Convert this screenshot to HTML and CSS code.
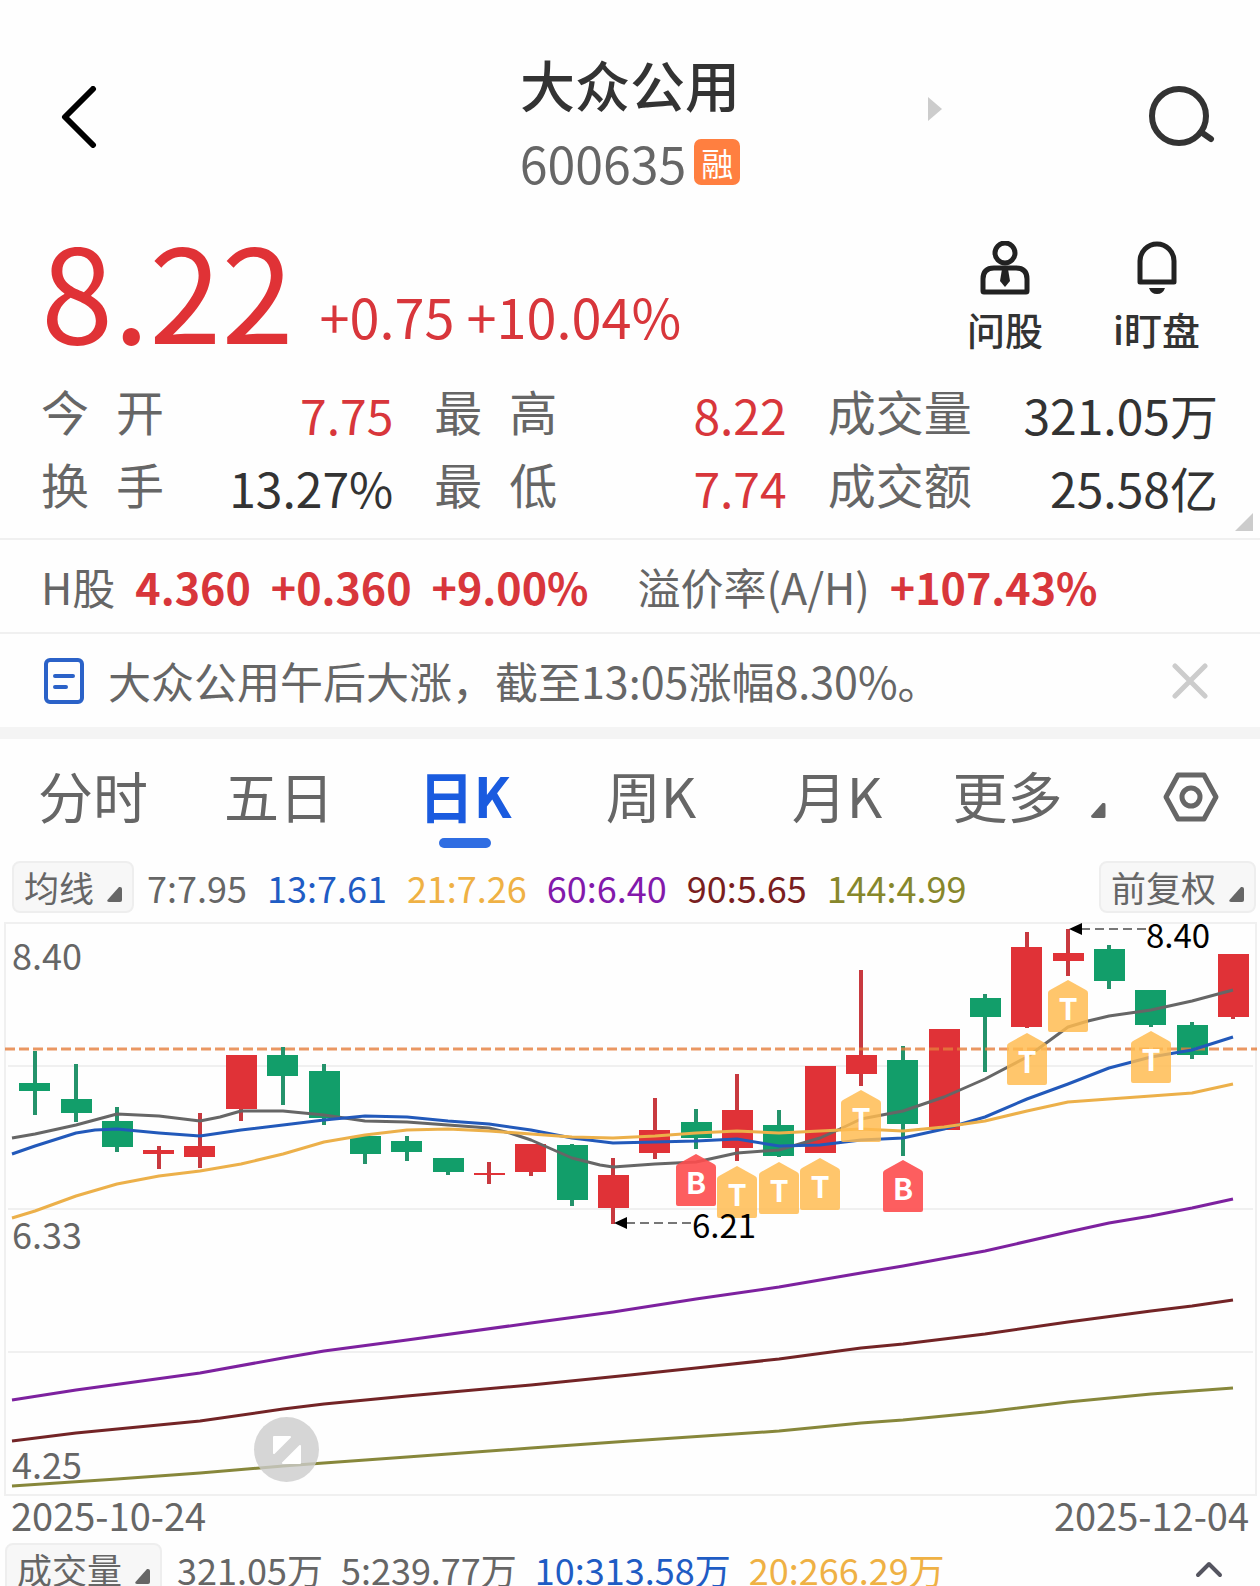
FILE: index.html
```
<!DOCTYPE html>
<html lang="zh-CN">
<head>
    <meta charset="UTF-8">
    <meta name="viewport" content="width=device-width, initial-scale=1.0">
    <title>大众公用 600635</title>
    <link rel="stylesheet" href="styles.css">
</head>
<body>

    <header class="header">
        <button class="iconButton back" aria-label="返回">
            <svg width="36" height="62" viewBox="0 0 36 62"><path d="M32 3L4 31L32 59"/></svg>
        </button>
        <div class="stock">
            <h1>大众公用</h1>
            <p class="code">600635<span class="badge">融</span></p>
        </div>
        <div class="headerRight">
            <button class="iconButton next" aria-label="下一只">
                <svg width="16" height="26" viewBox="0 0 16 26"><path d="M1 1L15 13L1 25z"/></svg>
            </button>
            <button class="iconButton search" aria-label="搜索">
                <svg width="68" height="60" viewBox="0 0 68 60"><circle cx="31" cy="30" r="27"/><path d="M53 46L63 53"/></svg>
            </button>
        </div>
    </header>

    <section class="quote">
        <div class="price">
            <strong>8.22</strong>
            <span>+0.75 +10.04%</span>
        </div>
        <div class="actions">
            <button class="action">
                <svg width="54" height="54" viewBox="0 0 54 54">
                    <circle cx="27" cy="12" r="10"/>
                    <path d="M5 50V38Q5 27 16 27H38Q49 27 49 38V50Q49 51 48 51H6Q5 51 5 50z"/>
                    <path class="solid" d="M24 28H30L32 40L27 46L22 40z"/>
                </svg>
                问股
            </button>
            <button class="action">
                <svg width="54" height="54" viewBox="0 0 54 54">
                    <path d="M10 41V20A17 17 0 0 1 44 20V41z"/>
                    <path class="solid" d="M19 47H35Q33 53 27 53Q21 53 19 47z"/>
                </svg>
                i盯盘
            </button>
        </div>
    </section>

    <dl class="stats">
        <div><dt>今 开</dt><dd class="up">7.75</dd></div>
        <div><dt>最 高</dt><dd class="up">8.22</dd></div>
        <div><dt>成交量</dt><dd>321.05万</dd></div>
        <div><dt>换 手</dt><dd>13.27%</dd></div>
        <div><dt>最 低</dt><dd class="up">7.74</dd></div>
        <div><dt>成交额</dt><dd>25.58亿</dd></div>
    </dl>

    <section class="hshare">
        <span>H股</span>
        <b>4.360</b>
        <b>+0.360</b>
        <b>+9.00%</b>
        <span class="premium">溢价率(A/H)</span>
        <b>+107.43%</b>
    </section>

    <section class="notice">
        <svg width="42" height="48" viewBox="0 0 42 48"><rect x="3" y="3" width="36" height="42" rx="4"/><path d="M12 19H30M12 30H23"/></svg>
        <a href="#">大众公用午后大涨，截至13:05涨幅8.30%。</a>
        <button class="iconButton close" aria-label="关闭">
            <svg width="36" height="36" viewBox="0 0 36 36"><path d="M3 3L33 33M33 3L3 33"/></svg>
        </button>
    </section>

    <nav class="tabs">
        <button>分时</button>
        <button>五日</button>
        <button class="active">日K</button>
        <button>周K</button>
        <button>月K</button>
        <button class="more">更多<i class="corner"></i></button>
        <button aria-label="设置">
            <svg width="56" height="50" viewBox="0 0 56 50"><path d="M15 3H41L53 25L41 47H15L3 25z"/><circle cx="28" cy="25" r="9"/></svg>
        </button>
    </nav>

    <div class="averages">
        <button class="chip">均线<i class="corner"></i></button>
        <span>7:7.95</span>
        <span class="blue">13:7.61</span>
        <span class="yellow">21:7.26</span>
        <span class="purple">60:6.40</span>
        <span class="maroon">90:5.65</span>
        <span class="olive">144:4.99</span>
        <button class="chip last">前复权<i class="corner"></i></button>
    </div>

    <div class="chart">
        <svg viewBox="0 0 1260 574" role="img" aria-label="日K线">
            <defs>
                <path id="pin" d="M0 0L18 10Q20 11 20 13V50Q20 52 18 52H-18Q-20 52 -20 50V13Q-20 11 -18 10z"/>
            </defs>
            <path class="grid" d="M5 1H1256V573H5zM8 144H1253M8 287H1253M8 430H1253"/>

            <g class="axis">
                <text x="12" y="48">8.40</text>
                <text x="12" y="327">6.33</text>
                <text x="12" y="557">4.25</text>
            </g>

            <!-- falling days -->
            <path class="wick down" d="M35 129V193M76 142V200M117 185V230M283 125V183M324 142V203M365 214V242M407 214V239M448 236V253M572 222V284M696 187V227M779 188V235M903 124V234M985 72V150M1109 23V67M1151 68V105M1192 100V137"/>
            <path class="body down" d="M19 161h31v8h-31zM61 177h31v14h-31zM102 199h31v26h-31zM267 133h31v21h-31zM309 149h31v47h-31zM350 214h31v18h-31zM391 219h31v11h-31zM433 236h31v14h-31zM557 223h31v55h-31zM681 200h31v16h-31zM763 203h31v31h-31zM887 138h31v64h-31zM970 76h31v19h-31zM1094 27h31v32h-31zM1135 68h31v35h-31zM1177 103h31v30h-31z"/>
            <!-- rising days -->
            <path class="wick rise" d="M159 224V247M200 191V246M241 133V199M489 240V262M531 222V254M613 236V302M655 176V237M737 152V239M861 48V164M1027 10V106M1068 7V54M1233 32V97"/>
            <path class="body rise" d="M143 228h31v4h-31zM184 224h31v11h-31zM226 133h31v54h-31zM474 251h31v2h-31zM515 222h31v28h-31zM598 253h31v33h-31zM639 208h31v23h-31zM722 188h31v38h-31zM805 144h31v87h-31zM846 133h31v19h-31zM929 107h31v101h-31zM1011 25h31v80h-31zM1053 31h31v8h-31zM1218 32h31v63h-31z"/>

            <path class="cost" d="M5 127H1257"/>

            <g class="lines">
                <polyline class="ma7" points="12,216 35,212 76,203 117,192 159,194 200,199 220,195 241,189 283,189 324,193 365,199 407,200 448,203 489,206 510,211 531,218 572,236 600,243 613,245 655,242 696,240 737,231 779,228 820,216 840,207 861,197 903,189 944,175 985,157 1027,135 1068,105 1088,99 1109,94 1151,88 1192,79 1233,68"/>
                <polyline class="ma13" points="12,232 35,224 76,211 95,208 117,207 159,211 200,214 241,208 283,203 324,198 365,194 407,195 448,199 489,202 531,208 572,216 613,221 655,220 696,219 737,217 779,224 820,223 861,218 903,216 944,207 985,195 1027,177 1068,162 1109,146 1151,135 1192,128 1233,115"/>
                <polyline class="ma21" points="12,296 35,289 76,274 117,262 159,254 200,249 241,242 283,232 324,220 365,213 407,208 448,207 489,209 531,212 572,215 613,216 655,214 696,211 737,209 779,211 820,209 861,207 903,209 944,205 985,199 1027,189 1068,180 1109,177 1151,174 1192,171 1233,162"/>
                <polyline class="ma60" points="12,478 76,468 200,451 283,436 324,429 407,418 531,401 613,390 696,377 779,365 861,351 903,344 985,329 1068,310 1109,301 1151,294 1192,286 1233,277"/>
                <polyline class="ma90" points="12,519 76,511 200,499 283,487 324,482 407,474 531,463 630,453 696,446 779,437 861,426 903,422 985,412 1068,400 1151,389 1192,384 1233,378"/>
                <polyline class="ma144" points="12,564 117,557 200,551 283,544 324,541 407,535 531,526 630,519 779,509 861,501 903,498 985,490 1068,480 1151,472 1233,466"/>
            </g>

            <g class="pins">
                <g transform="translate(696 232)"><use href="#pin" class="buy"/><text y="40">B</text></g>
                <g transform="translate(737 244)"><use href="#pin"/><text y="40">T</text></g>
                <g transform="translate(779 240)"><use href="#pin"/><text y="40">T</text></g>
                <g transform="translate(820 236)"><use href="#pin"/><text y="40">T</text></g>
                <g transform="translate(861 168)"><use href="#pin"/><text y="40">T</text></g>
                <g transform="translate(903 238)"><use href="#pin" class="buy"/><text y="40">B</text></g>
                <g transform="translate(1027 111)"><use href="#pin"/><text y="40">T</text></g>
                <g transform="translate(1068 58)"><use href="#pin"/><text y="40">T</text></g>
                <g transform="translate(1151 109)"><use href="#pin"/><text y="40">T</text></g>
            </g>

            <g class="extreme">
                <path class="dash" d="M626 301H692M1081 7H1146"/>
                <path d="M614 301l13-6v12zM1069 7l13-6v12z"/>
                <text x="692" y="316">6.21</text>
                <text x="1146" y="26">8.40</text>
            </g>
        </svg>
        <button class="expand" aria-label="全屏">
            <svg width="65" height="65" viewBox="0 0 65 65"><path d="M20 20H36L20 36zM46 29V46H29z"/></svg>
        </button>
    </div>

    <div class="dates">
        <time>2025-10-24</time>
        <time>2025-12-04</time>
    </div>

    <div class="volume">
        <button class="chip">成交量<i class="corner"></i></button>
        <span>321.05万</span>
        <span>5:239.77万</span>
        <span class="blue">10:313.58万</span>
        <span class="yellow">20:266.29万</span>
        <button class="iconButton fold" aria-label="收起">
            <svg width="28" height="18" viewBox="0 0 28 18"><path d="M3 15L14 4L25 15"/></svg>
        </button>
    </div>

</body>
</html>
```

FILE: styles.css
```
* {
    box-sizing:         border-box;
    margin:             0;
    padding:            0;
}

html                    { scrollbar-width: none; }

body {
    background-color:   #fefefe;
    color:              #666;
    font-family:        "Noto Sans CJK SC", sans-serif;
    white-space:        nowrap;
}

button {
    border:             0;
    background:         none;
    color:              inherit;
    font:               inherit;
}

svg                     { display: block; }

.up                     { color: #d8363b; }
.blue                   { color: #1f5cc4; }
.yellow                 { color: #efb144; }
.purple                 { color: #8319ab; }
.maroon                 { color: #7a1e20; }
.olive                  { color: #87872b; }

/* header */
.header {
    display:            grid;
    grid-template-columns: 1fr auto 1fr;
    align-items:        start;
    padding:            44px 44px 20px 61px;
}

.iconButton svg         { fill: none; stroke-linecap: round; stroke-linejoin: round; }
.back                   { justify-self: start; margin-top: 42px; }
.back svg               { stroke: #000; stroke-width: 6px; }

.stock                  { text-align: center; padding-right: 17px; }

h1 {
    color:              #333;
    font-size:          55px;
    font-weight:        500;
    line-height:        78px;
}

.code {
    display:            flex;
    align-items:        center;
    justify-content:    center;
    gap:                8px;
    font-size:          50px;
    line-height:        80px;
}

.badge {
    padding:            0 7px;
    border-radius:      7px;
    background-color:   #ff7f40;
    color:              #fff;
    font-size:          32px;
    line-height:        46px;
}

.headerRight {
    display:            flex;
    align-items:        flex-start;
    justify-content:    space-between;
    padding:            42px 0 0 170px;
}

.next                   { padding-top: 10px; }
.next svg               { fill: #ccc; }
.search svg             { stroke: #333; stroke-width: 6px; }

/* price */
.quote {
    display:            flex;
    justify-content:    space-between;
    padding:            0 60px 23px 41px;
}

.price {
    display:            flex;
    align-items:        flex-end;
    gap:                26px;
    height:             130px;
    color:              #d8363b;
    font-size:          54px;
    line-height:        72px;
}

.price strong {
    color:              #e03236;
    font-size:          130px;
    font-weight:        400;
    line-height:        130px;
}

.actions {
    display:            flex;
    gap:                70px;
    padding-top:        19px;
}

.action {
    display:            flex;
    flex-direction:     column;
    align-items:        center;
    gap:                8px;
    color:              #333;
    font-size:          38px;
    font-weight:        500;
    line-height:        52px;
}

.action svg             { fill: none; stroke: #222; stroke-width: 5px; stroke-linejoin: round; }
.action .solid          { fill: #222; stroke: none; }

.stats {
    display:            grid;
    grid-template-columns: 352fr 352fr 390fr;
    column-gap:         41px;
    position:           relative;
    padding:            0 42px 14px 41px;
    border-bottom:      2px solid #f0f0f0;
    font-size:          48px;
    line-height:        73px;
}

.stats div              { display: flex; justify-content: space-between; align-items: flex-start; }
.stats dt               { width: 3em; line-height: 65px; }
.stats dd               { color: #333; }
.stats dd.up            { color: #d8363b; }

.stats div:not(:nth-child(3n)) dt {
    width:              123px;
    text-align-last:    justify;
}

.stats::after {
    content:            "";
    position:           absolute;
    right:              7px;
    bottom:             7px;
    border-left:        18px solid transparent;
    border-bottom:      18px solid #ccc;
}

.hshare {
    display:            flex;
    gap:                20px;
    padding:            0 41px;
    border-bottom:      2px solid #f0f0f0;
    font-size:          43px;
    line-height:        92px;
}

.hshare b               { color: #d8363b; }
.premium                { margin-left: 29px; }

.notice {
    display:            flex;
    align-items:        center;
    padding:            0 52px 0 43px;
    border-bottom:      12px solid #f4f4f4;
    font-size:          43px;
    line-height:        93px;
}

.notice > svg           { fill: none; stroke: #2b62c8; stroke-width: 4px; stroke-linecap: round; }
.notice a               { margin: 0 auto 0 23px; color: inherit; text-decoration: none; }
.close svg              { stroke: #ccc; stroke-width: 5px; }

/* chart tabs */
.tabs {
    display:            grid;
    grid-template-columns: repeat(5, 186fr) 198fr 126fr;
    padding-right:      6px;
    font-size:          55px;
    line-height:        110px;
}

.tabs button            { display: flex; align-items: center; justify-content: center; position: relative; }
.tabs svg               { margin-top: 6px; fill: none; stroke: #666; stroke-width: 5px; stroke-linejoin: round; }
.tabs .active           { color: #1a5bdf; font-weight: 700; }
.tabs .more             { align-items: baseline; gap: 28px; }

.tabs .active::after {
    content:            "";
    position:           absolute;
    bottom:             1px;
    width:              52px;
    height:             10px;
    border-radius:      5px;
    background-color:   #2f6de2;
}

.corner {
    display:            inline-block;
    width:              15px;
    height:             15px;
    border-radius:      2px;
    background-color:   #666;
    clip-path:          polygon(80% 0, 100% 0, 100% 100%, 0 100%, 0 90%);
}

.averages, .volume {
    display:            flex;
    align-items:        center;
    font-size:          36px;
    line-height:        48px;
}

.averages               { gap: 20px; padding: 12px 4px 9px 12px; }
.averages .chip         { margin-right: -7px; }
.averages .last         { margin-left: auto; margin-right: 0; }

.chip {
    display:            flex;
    align-items:        baseline;
    gap:                13px;
    padding:            0 10px;
    border:             2px solid #eee;
    border-radius:      8px;
    background-color:   #f7f7f7;
    font-size:          35px;
}

/* candles */
.chart                  { position: relative; }
.grid                   { fill: none; stroke: #f0f0f0; stroke-width: 2px; }
.axis                   { fill: #666; font-size: 36px; }
.wick                   { fill: none; stroke-width: 4px; }
.wick.down              { stroke: #24936b; }
.wick.rise              { stroke: #c8393f; }
.body.down              { fill: #129e6a; }
.body.rise              { fill: #e03237; }
.cost                   { stroke: #e67e3c; stroke-width: 3px; stroke-dasharray: 10 4; opacity: .8; }

.lines                  { fill: none; stroke-width: 3px; stroke-linejoin: round; }
.ma7                    { stroke: #666; }
.ma13                   { stroke: #2259ba; }
.ma21                   { stroke: #ecb04a; }
.ma60                   { stroke: #7d219f; }
.ma90                   { stroke: #732426; }
.ma144                  { stroke: #87873b; }

.pins                   { fill: #ffbb50; }
.pins use               { opacity: .84; }
.pins .buy              { fill: #fd4c4e; opacity: .9; }
.pins text              { fill: #fff; font-size: 30px; font-weight: 700; text-anchor: middle; }

.extreme                { fill: #000; font-size: 33px; }
.dash                   { stroke: #777; stroke-width: 2px; stroke-dasharray: 9 5; }

.expand {
    position:           absolute;
    left:               254px;
    bottom:             14px;
    border-radius:      50%;
    background-color:   rgba(204, 204, 204, .8);
}

.expand svg             { fill: #fff; stroke: #fff; stroke-width: 2px; stroke-linejoin: round; }

.dates {
    display:            flex;
    justify-content:    space-between;
    padding:            0 11px;
    font-size:          38px;
    line-height:        38px;
}

.volume                 { gap: 18px; padding: 9px 37px 0 5px; }
.volume .chip           { margin-right: -3px; }
.fold                   { margin-left: auto; }
.fold svg               { stroke: #555560; stroke-width: 4px; }
```
